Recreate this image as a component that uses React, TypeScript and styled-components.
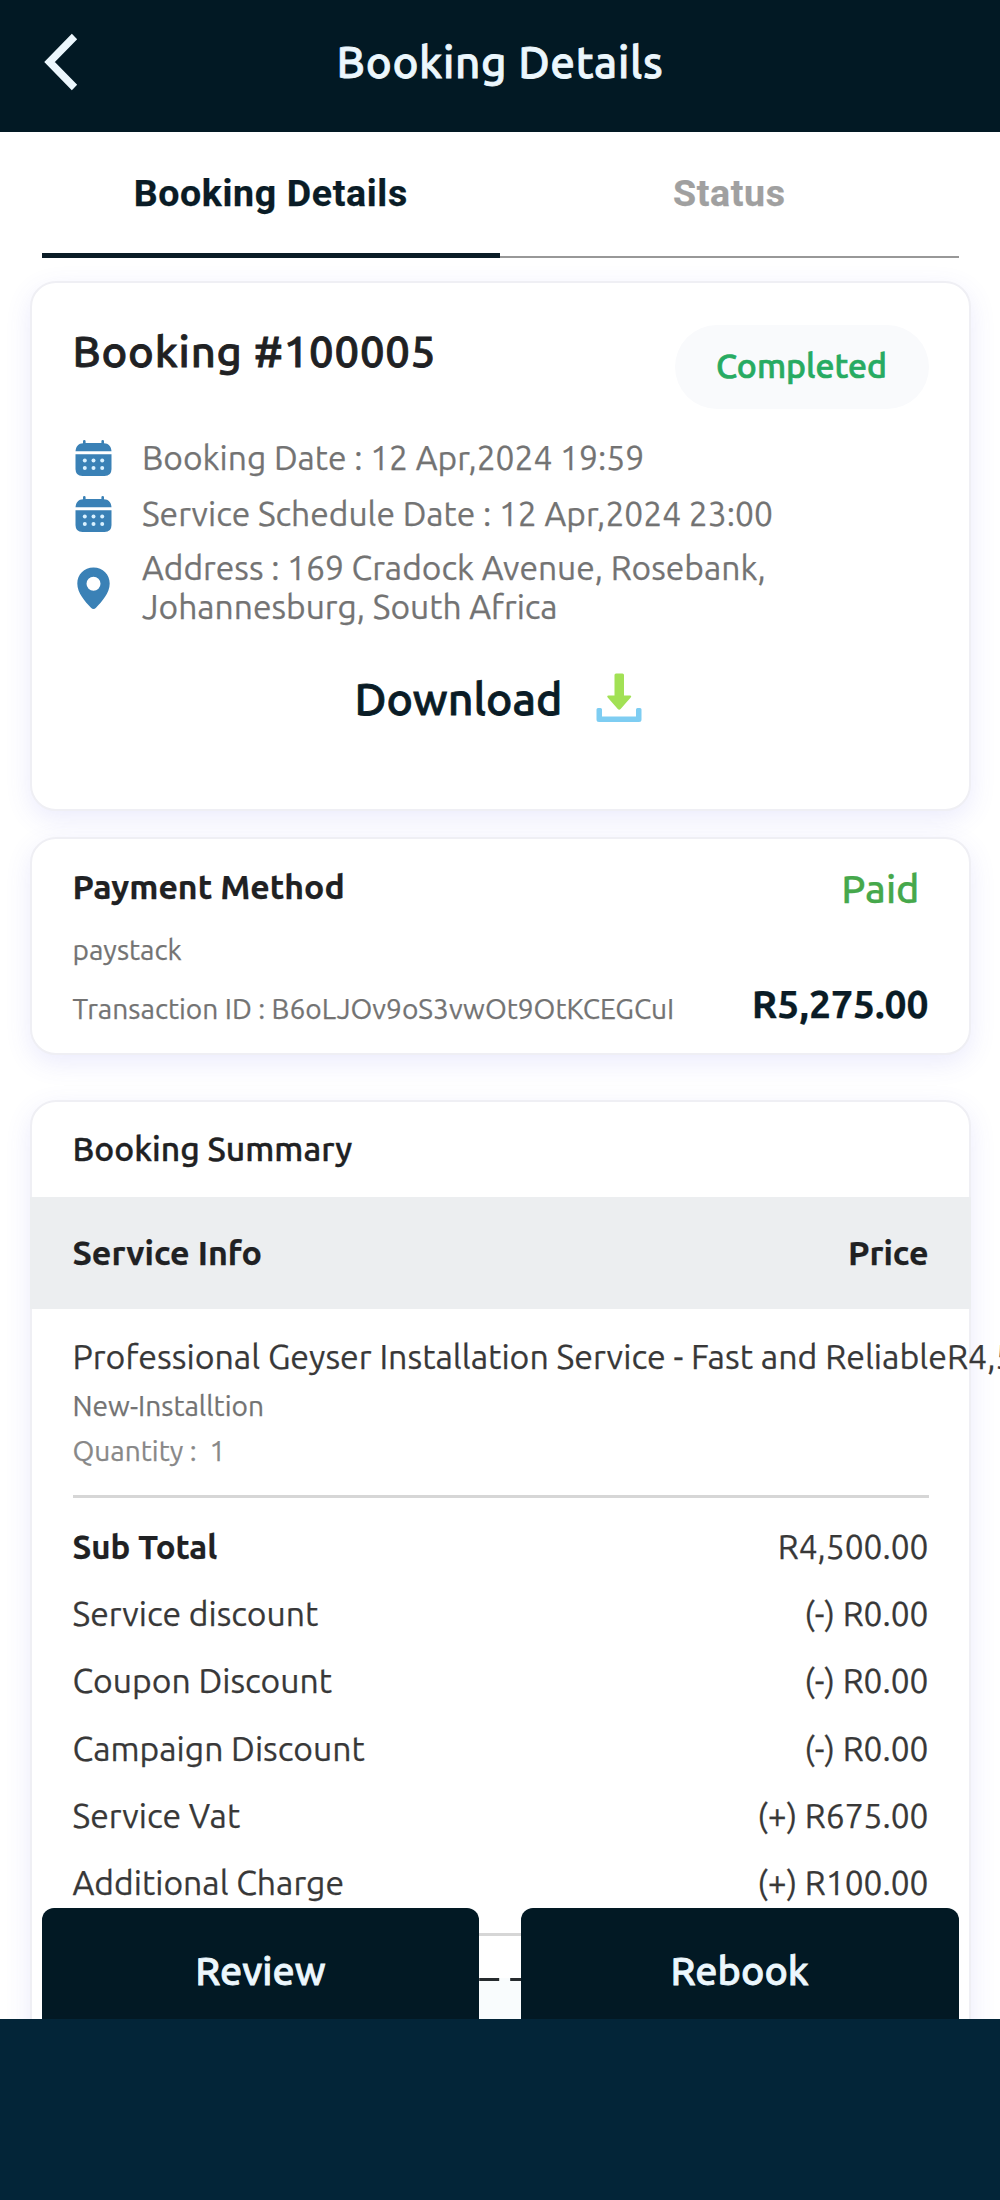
import React from 'react';
import styled, { createGlobalStyle } from 'styled-components';

const colors = {
  bar: '#021924',
  footer: '#032538',
  ink: '#202123',
  body: '#383838',
  muted: '#737373',
  faint: '#888888',
  brand: '#0a1c26',
  icon: '#3a81b6',
  success: '#27ab62',
  paid: '#46a84b',
};

const GlobalStyle = createGlobalStyle`
  * { box-sizing: border-box; }
  html, body { margin: 0; background: ${colors.footer}; }
  body {
    font-family: Ubuntu, "Noto Sans", "Open Sans", sans-serif;
    -webkit-text-stroke: 0.25px currentColor;
  }
`;

const Page = styled.div`
  width: 1000px;
  height: 2200px;
  overflow: hidden;
  background: ${colors.footer};
`;

const Screen = styled.div`
  position: relative;
  height: 2019px;
  overflow: hidden;
  background: #fff;
`;

const TopBar = styled.header`
  display: grid;
  grid-template-columns: 120px 1fr 120px;
  align-items: center;
  height: 132px;
  padding-bottom: 9px;
  background: ${colors.bar};
`;

const BackButton = styled.button`
  display: flex;
  padding: 0 0 0 44px;
  border: 0;
  background: none;
`;

const PageTitle = styled.h1`
  margin: 0;
  font-size: 44px;
  font-weight: 500;
  line-height: 60px;
  letter-spacing: 0.65px;
  text-align: center;
  color: #ecf7fd;
  -webkit-text-stroke: 0.8px currentColor;
`;

const Tabs = styled.nav`
  display: grid;
  grid-template-columns: 1fr 1fr;
  align-items: end;
  height: 126px;
  padding: 0 41.5px;
`;

const Tab = styled.div<{ $active?: boolean }>`
  height: 126px;
  padding-top: 1px;
  border-bottom: ${p => (p.$active ? `5px solid ${colors.brand}` : '2px solid #989898')};
  font-family: Roboto, sans-serif;
  font-size: 37.5px;
  font-weight: 700;
  line-height: 120px;
  letter-spacing: 0.65px;
  text-align: center;
  color: ${p => (p.$active ? colors.brand : '#a0a0a0')};
`;

const Cards = styled.main`
  display: flex;
  flex-direction: column;
  padding: 23px 29px 0 30px;
`;

const Card = styled.section`
  border: 2px solid #efeff4;
  border-radius: 26px;
  background: #fff;
  box-shadow: 0 8px 26px rgba(90, 90, 230, 0.12);
`;

const BookingCard = styled(Card)`
  height: 530px;
  padding: 42px 40.5px 0 40.5px;
`;

const PaymentCard = styled(Card)`
  display: flex;
  justify-content: space-between;
  height: 218px;
  margin-top: 26px;
  padding: 27px 40.5px 0 40.5px;
`;

const SummaryCard = styled(Card)`
  height: 1000px;
  margin-top: 45px;
`;

const BookingHead = styled.div`
  display: flex;
  justify-content: space-between;
  align-items: flex-start;
  height: 105px;
`;

const BookingNumber = styled.h2`
  margin: 0;
  font-size: 43.6px;
  font-weight: 500;
  line-height: 52px;
  letter-spacing: 0.8px;
  color: ${colors.ink};
  -webkit-text-stroke: 0.8px currentColor;
`;

const StatusPill = styled.span`
  width: 254px;
  height: 84px;
  border-radius: 42px;
  background: #f9fafc;
  font-size: 33.8px;
  font-weight: 500;
  line-height: 81px;
  text-align: center;
  color: ${colors.success};
  -webkit-text-stroke: 0.7px currentColor;
`;

const Detail = styled.div<{ $height: number }>`
  display: grid;
  grid-template-columns: 69.5px 1fr;
  align-items: center;
  height: ${p => p.$height}px;
  font-size: 33.6px;
  line-height: 38.6px;
  color: ${colors.muted};

  svg { margin-left: 2px; }
`;

const DownloadButton = styled.button`
  display: flex;
  align-items: center;
  justify-content: center;
  gap: 34px;
  width: 100%;
  height: 56px;
  margin-top: 36px;
  padding: 0 4px 0 0;
  border: 0;
  background: none;
  font-family: inherit;
  font-size: 44.7px;
  font-weight: 500;
  color: ${colors.brand};
  -webkit-text-stroke: 0.8px currentColor;
`;

const Column = styled.div<{ $end?: boolean }>`
  display: flex;
  flex-direction: column;
  align-items: ${p => (p.$end ? 'flex-end' : 'flex-start')};
  white-space: nowrap;
`;

const PaymentTitle = styled.h3`
  margin: 0;
  font-size: 33.8px;
  font-weight: 700;
  line-height: 40px;
  color: ${colors.ink};
`;

const Small = styled.span<{ $gap: number; $tone?: string }>`
  margin-top: ${p => p.$gap}px;
  font-size: 28.1px;
  line-height: 40px;
  white-space: pre;
  color: ${p => p.$tone ?? colors.muted};
`;

const PaidLabel = styled.span`
  margin: 1px 9px 0 0;
  font-size: 39.6px;
  font-weight: 500;
  line-height: 43px;
  color: ${colors.paid};
`;

const Amount = styled.strong`
  margin-top: 74px;
  font-size: 39px;
  font-weight: 700;
  line-height: 40px;
  color: ${colors.brand};
`;

const SummaryTitle = styled.h3`
  height: 95px;
  margin: 0;
  padding-left: 40.5px;
  font-size: 33.7px;
  font-weight: 500;
  line-height: 93px;
  color: ${colors.ink};
  -webkit-text-stroke: 0.4px currentColor;
`;

const TableHead = styled.div`
  display: flex;
  justify-content: space-between;
  height: 112px;
  margin: 0 -2px;
  padding: 0 42.5px;
  background: #eceef0;
  font-size: 34px;
  font-weight: 700;
  line-height: 111px;
  color: ${colors.ink};
`;

const SummaryBody = styled.div`
  padding: 27px 40.5px 0 40.5px;
`;

const ServiceLine = styled.div`
  display: flex;
  font-size: 33.9px;
  line-height: 40px;
  white-space: nowrap;
  color: ${colors.body};

  span { flex: none; }
`;

const Divider = styled.hr<{ $top: number }>`
  height: 3px;
  margin: ${p => p.$top}px 0 0;
  border: 0;
  background: #d6d6d6;
`;

const Rows = styled.div`
  padding-top: 15px;
`;

const Row = styled.div<{ $strong?: boolean }>`
  display: flex;
  justify-content: space-between;
  height: 67.2px;
  font-size: 33.5px;
  line-height: 67.2px;
  color: ${colors.body};

  span:first-child {
    font-size: ${p => (p.$strong ? 33 : 33.7)}px;
    font-weight: ${p => (p.$strong ? 700 : 400)};
    color: ${p => (p.$strong ? colors.ink : colors.body)};
  }
`;

const TotalBox = styled.div`
  height: 110px;
  margin-top: 42px;
  background:
    repeating-linear-gradient(90deg, #262b2e 0 20px, transparent 20px 30.4px) 11.2px 0 / 1200px 3px repeat-x,
    #f9fcfd;
`;

const ActionBar = styled.div`
  position: absolute;
  left: 0;
  right: 0;
  bottom: 0;
  display: grid;
  grid-template-columns: 1fr 1fr;
  gap: 41.5px;
  padding: 0 41.5px;
`;

const ActionButton = styled.button`
  height: 111px;
  padding: 0 0 0 0;
  border: 0;
  border-radius: 12px 12px 0 0;
  background: ${colors.bar};
  font-family: inherit;
  font-size: 39.6px;
  font-weight: 500;
  line-height: 125px;
  text-align: center;
  color: #ecf7fd;
  -webkit-text-stroke: 0.8px currentColor;
`;

const BackIcon = () => (
  <svg width="34" height="58" viewBox="0 0 34 58" fill="none" stroke="#ecf7fd" strokeWidth="7.5">
    <path d="M30.500 3.500 L5.500 29 L30.500 54.500" />
  </svg>
);

const CalendarIcon = () => (
  <svg width="37" height="37" viewBox="0 0 37 37" fill={colors.icon}>
    <path d="M0.500 11.200 C1 6 3.500 3.400 8 3.200 V1.300 a1.300 1.300 0 0 1 2.600 0 V3 H26.400 V1.300 a1.300 1.300 0 0 1 2.600 0 V3.200 C33.500 3.400 36 6 36.500 11.200 Z" />
    <path d="M0.500 14.300 H36.500 V29 Q36.500 36 29.500 36 H7.500 Q0.500 36 0.500 29 Z" />
    <g fill="#d9f1ff">
      {[9.8, 18.5, 27.2].map(x =>
        [20.5, 28].map(y => <circle key={`${x}-${y}`} cx={x} cy={y} r="2" />),
      )}
    </g>
  </svg>
);

const PinIcon = () => (
  <svg width="37" height="43" viewBox="0 0 37 43" fill={colors.icon} fillRule="evenodd">
    <path d="M18.500 0.500 C9 0.500 2.300 7.500 2.300 16.500 C2.300 26 10 34.500 16 40.800 Q18.500 43.200 21 40.800 C27 34.500 34.700 26 34.700 16.500 C34.700 7.500 28 0.500 18.500 0.500 Z M18.500 9.700 a7 7 0 1 1 0 14 a7 7 0 1 1 0 -14 Z" />
  </svg>
);

const DownloadIcon = () => (
  <svg width="46" height="50" viewBox="0 0 46 50">
    <path
      d="M0.500 36.500 Q0.500 35 2 35 H4.500 Q6 35 6 36.500 V43.500 H40 V36.500 Q40 35 41.500 35 H44 Q45.500 35 45.500 36.500 V46.500 Q45.500 49 43 49 H3 Q0.500 49 0.500 46.500 Z"
      fill="#7ecdf2"
    />
    <path
      d="M18.500 2 Q18.500 0.500 20 0.500 H26.500 Q28 0.500 28 2 V22.500 H34 Q36 22.800 34.700 24.400 L24.600 36 Q23.200 37.400 21.800 36 L11.700 24.400 Q10.500 22.800 12.500 22.500 H18.500 Z"
      fill="#a2e155"
    />
  </svg>
);

const charges: { label: string; value: string; strong?: boolean }[] = [
  { label: 'Sub Total', value: 'R4,500.00', strong: true },
  { label: 'Service discount', value: '(-) R0.00' },
  { label: 'Coupon Discount', value: '(-) R0.00' },
  { label: 'Campaign Discount', value: '(-) R0.00' },
  { label: 'Service Vat', value: '(+) R675.00' },
  { label: 'Additional Charge', value: '(+) R100.00' },
];

export default function App() {
  return (
    <Page>
      <GlobalStyle />
      <Screen>
        <TopBar>
          <BackButton aria-label="Back">
            <BackIcon />
          </BackButton>
          <PageTitle>Booking Details</PageTitle>
        </TopBar>
        <Tabs>
          <Tab $active>Booking Details</Tab>
          <Tab>Status</Tab>
        </Tabs>
        <Cards>
          <BookingCard>
            <BookingHead>
              <BookingNumber>Booking #100005</BookingNumber>
              <StatusPill>Completed</StatusPill>
            </BookingHead>
            <Detail $height={56}>
              <CalendarIcon />
              <span>Booking Date : 12 Apr,2024 19:59</span>
            </Detail>
            <Detail $height={56}>
              <CalendarIcon />
              <span>Service Schedule Date : 12 Apr,2024 23:00</span>
            </Detail>
            <Detail $height={92}>
              <PinIcon />
              <span>
                Address : 169 Cradock Avenue, Rosebank,
                <br />
                Johannesburg, South Africa
              </span>
            </Detail>
            <DownloadButton>
              Download
              <DownloadIcon />
            </DownloadButton>
          </BookingCard>

          <PaymentCard>
            <Column>
              <PaymentTitle>Payment Method</PaymentTitle>
              <Small $gap={24}>paystack</Small>
              <Small $gap={19}>Transaction ID : B6oLJOv9oS3vwOt9OtKCEGCuI</Small>
            </Column>
            <Column $end>
              <PaidLabel>Paid</PaidLabel>
              <Amount>R5,275.00</Amount>
            </Column>
          </PaymentCard>

          <SummaryCard>
            <SummaryTitle>Booking Summary</SummaryTitle>
            <TableHead>
              <span>Service Info</span>
              <span>Price</span>
            </TableHead>
            <SummaryBody>
              <ServiceLine>
                <span>Professional Geyser Installation Service - Fast and Reliable</span>
                <span>R4,500.00</span>
              </ServiceLine>
              <Column>
                <Small $gap={10}>New-Installtion</Small>
                <Small $gap={5} $tone={colors.faint}>{'Quantity :  1'}</Small>
              </Column>
              <Divider $top={24} />
              <Rows>
                {charges.map(c => (
                  <Row key={c.label} $strong={c.strong}>
                    <span>{c.label}</span>
                    <span>{c.value}</span>
                  </Row>
                ))}
              </Rows>
              <Divider $top={17} />
              <TotalBox />
            </SummaryBody>
          </SummaryCard>
        </Cards>
        <ActionBar>
          <ActionButton>Review</ActionButton>
          <ActionButton>Rebook</ActionButton>
        </ActionBar>
      </Screen>
    </Page>
  );
}
